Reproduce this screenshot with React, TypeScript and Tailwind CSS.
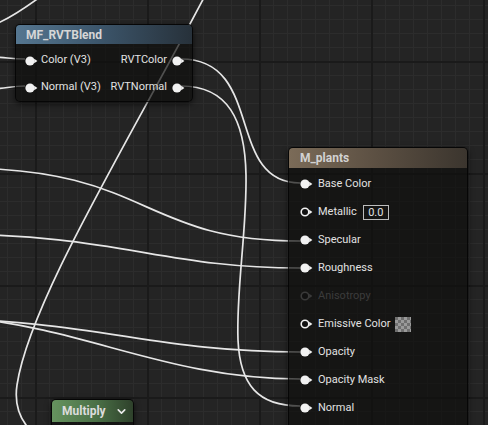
import { ChevronDown } from "lucide-react";

// wires between the nodes, drawn under the (semi transparent) node bodies
const wires = [
  "M -4 24 C 10 18, 25 8, 40 -3",
  "M 209 -12 C 130 140, 30 300, 17 385 C 14 405, 20 420, 32 432",
  "M -10 57 C 5 57, 10 59, 25 59",
  "M -10 89 C 5 89, 10 86, 25 86",
  "M 181 59 C 265 59, 225 183, 300 183",
  "M 181 86 C 228 86, 245 120, 246 175 C 247 230, 236 290, 238 340 C 240 385, 258 406, 300 406",
  "M -40 168 C 150 168, 140 241, 300 241",
  "M -60 234 C 120 234, 160 268, 300 268",
  "M -80 318 C 100 320, 150 352, 300 352",
  "M -30 318 C 90 330, 170 379, 300 379",
];

const Pin = ({ hollow, dim }: { hollow?: boolean; dim?: boolean }) => {
  const c = dim ? "#3a3a3a" : "#f2f2f2";
  return (
    <svg width="14" height="10" viewBox="0 0 14 10" className="shrink-0">
      {hollow ? (
        <circle cx="5" cy="5" r="3.8" fill="#111" stroke={c} strokeWidth="1.6" />
      ) : (
        <circle cx="5" cy="5" r="4.6" fill={c} />
      )}
      <polygon points="9.2,2.8 12.4,5 9.2,7.2" fill={c} />
    </svg>
  );
};

const Checker = () => (
  <svg width="16" height="15" viewBox="0 0 16 15" className="shrink-0">
    <defs>
      <pattern id="chk" width="6" height="6" patternUnits="userSpaceOnUse">
        <rect width="6" height="6" fill="#9a9a9a" />
        <rect width="3" height="3" fill="#6f6f6f" />
        <rect x="3" y="3" width="3" height="3" fill="#6f6f6f" />
      </pattern>
    </defs>
    <rect width="16" height="15" fill="url(#chk)" />
  </svg>
);

type Input = { label: string; hollow?: boolean; dim?: boolean; extra?: "value" | "checker" };

const plantInputs: Input[] = [
  { label: "Base Color" },
  { label: "Metallic", hollow: true, extra: "value" },
  { label: "Specular" },
  { label: "Roughness" },
  { label: "Anisotropy", hollow: true, dim: true },
  { label: "Emissive Color", hollow: true, extra: "checker" },
  { label: "Opacity" },
  { label: "Opacity Mask" },
  { label: "Normal" },
];

const BlendNode = () => (
  <div className="absolute left-[15px] top-[24px] w-[178px] overflow-hidden rounded-[5px] border border-black/70 bg-[#0f100e]/70 shadow-[0_2px_6px_rgba(0,0,0,0.6)]">
    <div className="flex h-[19px] items-center bg-[linear-gradient(to_right,#557690,#3d576d_45%,#27313a)] px-[10px] text-[12px] font-bold text-[#d6d6d6]">
      MF_RVTBlend
    </div>
    <div className="flex flex-col pt-[3px]">
      {[
        ["Color (V3)", "RVTColor"],
        ["Normal (V3)", "RVTNormal"],
      ].map(([inp, out]) => (
        <div key={inp} className="flex h-[27px] items-center justify-between">
          <div className="flex items-center gap-[2px] pl-[9px]">
            <Pin />
            <span>{inp}</span>
          </div>
          <div className="flex items-center gap-[5px] pr-[6px]">
            <span>{out}</span>
            <Pin />
          </div>
        </div>
      ))}
    </div>
  </div>
);

const PlantsNode = () => (
  <div className="absolute left-[288px] top-[147px] h-[300px] w-[180px] overflow-hidden rounded-[5px] border border-black/70 bg-[#0f100e]/70 shadow-[0_2px_6px_rgba(0,0,0,0.6)]">
    <div className="flex h-[20px] items-center bg-[linear-gradient(to_right,#7b6b58,#5b4f42_50%,#3b352e)] px-[11px] text-[12px] font-bold text-[#d2d2d2]">
      M_plants
    </div>
    <div className="flex flex-col pt-[2px]">
      {plantInputs.map((p) => (
        <div key={p.label} className="flex h-[28px] items-center pl-[11px]">
          <Pin hollow={p.hollow} dim={p.dim} />
          <span className={`ml-[4px] ${p.dim ? "text-[#3c3c3c]" : ""}`}>{p.label}</span>
          {p.extra === "value" && (
            <span className="ml-[6px] flex h-[15px] w-[26px] items-center justify-center border border-[#bdbdbd] text-[11px] leading-none">
              0.0
            </span>
          )}
          {p.extra === "checker" && (
            <span className="ml-[4px] flex">
              <Checker />
            </span>
          )}
        </div>
      ))}
    </div>
  </div>
);

const MultiplyNode = () => (
  <div className="absolute left-[51px] top-[399px] h-[40px] w-[83px] overflow-hidden rounded-[5px] border border-black/70 bg-[#0f100e]/70 shadow-[0_2px_6px_rgba(0,0,0,0.6)]">
    <div className="flex h-[22px] items-center justify-between bg-[linear-gradient(to_right,#66935f,#4a7046_55%,#2e412b)] pl-[10px] pr-[5px] text-[12px] font-bold text-[#dcdcdc]">
      <span>Multiply</span>
      <ChevronDown size={13} strokeWidth={3} className="text-[#e8e8e8]" />
    </div>
  </div>
);

export default function App() {
  return (
    <div className="relative h-[425px] w-[488px] overflow-hidden bg-[#242424] bg-[linear-gradient(to_right,#1a1a1a_2px,transparent_2px),linear-gradient(to_bottom,#1a1a1a_2px,transparent_2px),linear-gradient(to_right,#2c2c2c_1px,transparent_1px),linear-gradient(to_bottom,#2c2c2c_1px,transparent_1px)] bg-size-[112px_112px,112px_112px,14px_14px,14px_14px] bg-position-[35px_61px] font-[Roboto,sans-serif] text-[11px] text-[#e2e2e2]">
      <svg className="absolute inset-0" width="488" height="425" viewBox="0 0 488 425">
        {wires.map((d, i) => (
          <path key={i} d={d} fill="none" stroke="#e6e6e6" strokeWidth="1.7" />
        ))}
      </svg>
      <BlendNode />
      <PlantsNode />
      <MultiplyNode />
    </div>
  );
}
